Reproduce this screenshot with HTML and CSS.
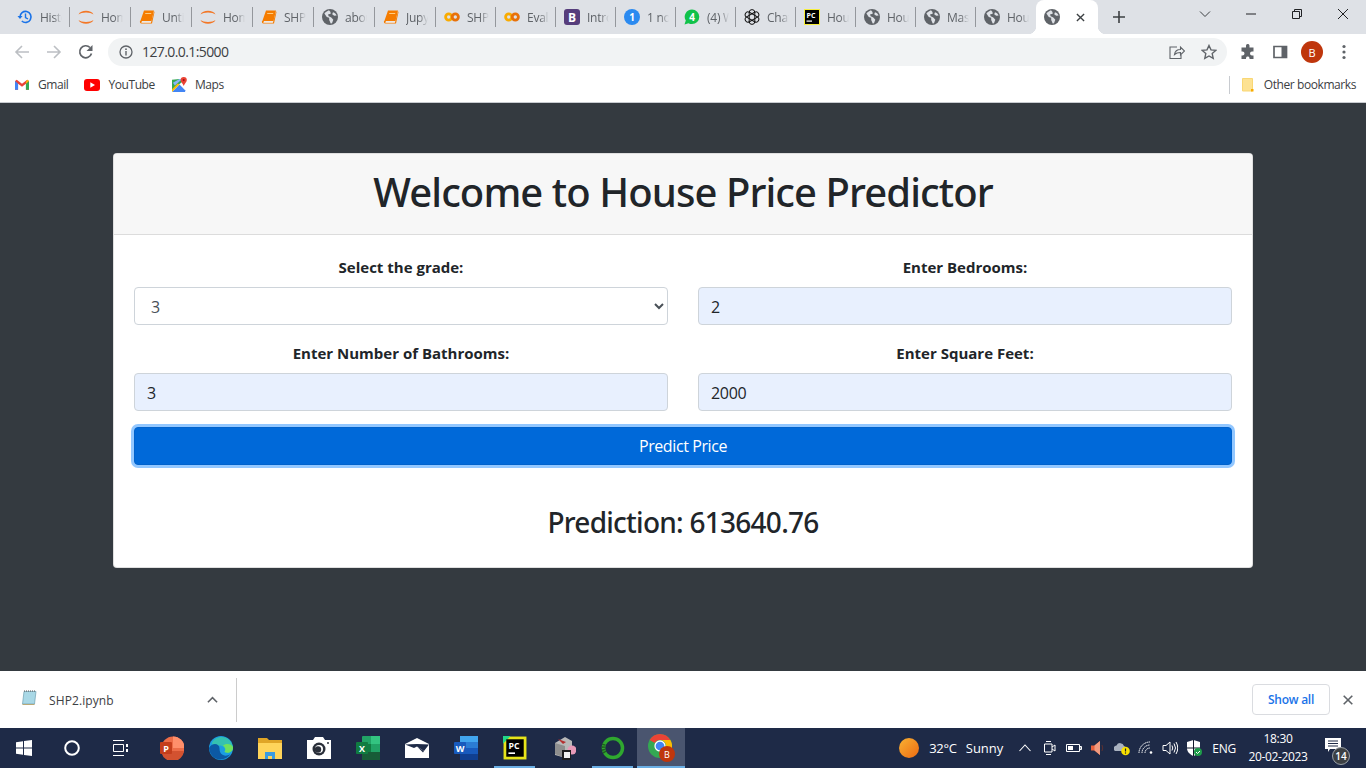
FILE: index.html
```html
<!DOCTYPE html>
<html lang="en">
<head>
<meta charset="utf-8">
<title>House Price Predictor</title>
<link rel="stylesheet" href="styles.css">
</head>
<body>
<svg class="defs" width="0" height="0" aria-hidden="true">
  <symbol id="globe" viewBox="0 0 16 16">
    <circle cx="8" cy="8" r="8" fill="#5f6368"/>
    <path d="M7 1.200C5 2 3.500 3 2.400 4.500L4.800 8l2.400.8V11l1.500 3.600 1.300-.4 1.300-3.500-2-2.200L6.700 7.300 6 5.500 8.700 4.800 8.500 3zM11 3.200l-.8 2 2 1.600 2.400-.3C14.200 5.100 12.800 3.800 11 3.200z" fill="#dee1e6"/>
  </symbol>
  <symbol id="book" viewBox="0 0 16 16">
    <path d="M5 1.500h10L12.500 12H3.500C2.500 12 2 12.500 2 13L1 13z" fill="#f57c00"/>
    <path d="M15 2.500l.5.500L13 14.500H2.500C1 14.500.7 13 1 12l2 0-.4 1.400h9.400z" fill="#f57c00"/>
    <path d="M2.500 12.700h9.500l-.2.800H2.300z" fill="#fff"/>
    <path d="M6.300 4h6l-.2 1h-6z" fill="#ffcc80"/>
  </symbol>
  <symbol id="jup" viewBox="0 0 16 16">
    <path d="M.5 5.500C2.500.5 13.500.5 15.500 5.500 12.500 2.800 3.500 2.800.5 5.500zM.5 11C3.500 13.500 12.500 13.500 15.500 11 13.500 16 2.500 16 .5 11z" fill="#f37726"/>
  </symbol>
  <symbol id="colab" viewBox="0 0 16 16">
    <circle cx="4.700" cy="8" r="3.100" fill="none" stroke="#f9ab00" stroke-width="2.800"/>
    <circle cx="11.300" cy="8" r="3.100" fill="none" stroke="#e8710a" stroke-width="2.800"/>
  </symbol>
  <symbol id="knot" viewBox="0 0 16 16">
    <g fill="none" stroke="#111" stroke-width="1">
      <rect x="5.200" y=".6" width="5.600" height="14.800" rx="2.800"/>
      <rect x="5.200" y=".6" width="5.600" height="14.800" rx="2.800" transform="rotate(60 8 8)"/>
      <rect x="5.200" y=".6" width="5.600" height="14.800" rx="2.800" transform="rotate(120 8 8)"/>
    </g>
  </symbol>
</svg>

<div class="tabstrip">
  <div class="tab"><svg class="fav" viewBox="0 0 16 16"><path d="M3 8a5.500 5.500 0 1 1 1.800 4" fill="none" stroke="#1a73e8" stroke-width="1.600"/><path d="M.5 7h5L3 10z" fill="#1a73e8"/><path d="M8.500 4.500V8.500l2.500 1.500" fill="none" stroke="#1a73e8" stroke-width="1.400"/></svg><span class="tab-title">History</span></div>
  <div class="tab"><svg class="fav"><use href="#jup"/></svg><span class="tab-title">Home</span></div>
  <div class="tab"><svg class="fav"><use href="#book"/></svg><span class="tab-title">Untitled</span></div>
  <div class="tab"><svg class="fav"><use href="#jup"/></svg><span class="tab-title">Home</span></div>
  <div class="tab"><svg class="fav"><use href="#book"/></svg><span class="tab-title">SHP2</span></div>
  <div class="tab"><svg class="fav"><use href="#globe"/></svg><span class="tab-title">about</span></div>
  <div class="tab"><svg class="fav"><use href="#book"/></svg><span class="tab-title">Jupyter</span></div>
  <div class="tab"><svg class="fav"><use href="#colab"/></svg><span class="tab-title">SHP2</span></div>
  <div class="tab"><svg class="fav"><use href="#colab"/></svg><span class="tab-title">Evaluate</span></div>
  <div class="tab"><svg class="fav" viewBox="0 0 16 16"><rect width="16" height="16" rx="3" fill="#563d7c"/><text x="8" y="12.500" class="svg-b">B</text></svg><span class="tab-title">Introduction</span></div>
  <div class="tab"><svg class="fav" viewBox="0 0 16 16"><circle cx="8" cy="8" r="8" fill="#2b8af0"/><text x="8" y="12" class="svg-one">1</text></svg><span class="tab-title">1 note</span></div>
  <div class="tab"><svg class="fav" viewBox="0 0 16 16"><path d="M8 .5a7.300 7.300 0 0 1 0 14.600c-1.300 0-2.500-.3-3.500-.9L.5 15.500l1.300-3.900A7.300 7.300 0 0 1 8 .5z" fill="#11c24a"/><text x="8" y="11.500" class="svg-one">4</text></svg><span class="tab-title">(4) WhatsApp</span></div>
  <div class="tab"><svg class="fav"><use href="#knot"/></svg><span class="tab-title">ChatGPT</span></div>
  <div class="tab"><svg class="fav" viewBox="0 0 16 16"><rect x=".5" y=".5" width="15" height="15" fill="#000" stroke="#f7ee3c"/><text x="2.500" y="8.500" class="svg-pc">PC</text><rect x="2.500" y="11.500" width="5.500" height="1.200" fill="#fff"/></svg><span class="tab-title">House</span></div>
  <div class="tab"><svg class="fav"><use href="#globe"/></svg><span class="tab-title">House</span></div>
  <div class="tab"><svg class="fav"><use href="#globe"/></svg><span class="tab-title">Master</span></div>
  <div class="tab tab-last"><svg class="fav"><use href="#globe"/></svg><span class="tab-title">House</span></div>
  <div class="tab-active">
    <svg class="fav"><use href="#globe"/></svg>
    <svg class="tab-x" viewBox="0 0 10 10"><path d="M1 1l8 8M9 1l-8 8" stroke="#3c4043" stroke-width="1.500"/></svg>
  </div>
  <svg class="newtab" viewBox="0 0 12 12"><path d="M6 0v12M0 6h12" stroke="#3c4043" stroke-width="1.600"/></svg>
  <div class="strip-fill"></div>
  <div class="winbtn"><svg class="win-ic" viewBox="0 0 12 12"><path d="M1 3.500l5 5 5-5" fill="none" stroke="#3c4043"/></svg></div>
  <div class="winbtn"><svg class="win-ic" viewBox="0 0 12 12"><path d="M1 6h10" stroke="#202124"/></svg></div>
  <div class="winbtn"><svg class="win-ic" viewBox="0 0 12 12"><path d="M1.500 3.500h7v7h-7zM3.500 3.500v-2h7v7h-2" fill="none" stroke="#202124"/></svg></div>
  <div class="winbtn"><svg class="win-ic" viewBox="0 0 12 12"><path d="M1 1l10 10M11 1L1 11" stroke="#202124"/></svg></div>
</div>

<div class="toolbar">
  <div class="tb-btn"><svg class="tb-ic" viewBox="0 0 16 16"><path d="M15 8H2M8 2L2 8l6 6" fill="none" stroke="#bcbfc3" stroke-width="1.600"/></svg></div>
  <div class="tb-btn"><svg class="tb-ic" viewBox="0 0 16 16"><path d="M1 8h13M8 2l6 6-6 6" fill="none" stroke="#bcbfc3" stroke-width="1.600"/></svg></div>
  <div class="tb-btn"><svg class="tb-ic" viewBox="0 0 16 16"><path d="M13.500 9.500A6 6 0 1 1 12 3.500" fill="none" stroke="#5f6368" stroke-width="1.700"/><path d="M14.500 1v6h-6z" fill="#5f6368"/></svg></div>
  <div class="omnibox">
    <svg class="omni-info" viewBox="0 0 14 14"><circle cx="7" cy="7" r="6" fill="none" stroke="#5f6368" stroke-width="1.300"/><path d="M7 6v4.500" stroke="#5f6368" stroke-width="1.400"/><circle cx="7" cy="4.200" r=".9" fill="#5f6368"/></svg>
    <span class="omni-url">127.0.0.1:5000</span>
    <span class="omni-fill"></span>
    <svg class="omni-share" viewBox="0 0 16 16"><path d="M5.500 10.500c.5-3.500 3-5 6-5V3l4 4-4 4V8.500c-2.500 0-4.500.5-6 2z" fill="none" stroke="#5f6368" stroke-width="1.100"/><path d="M8 3H1v11.500h11V11" fill="none" stroke="#5f6368" stroke-width="1.100"/></svg>
    <svg class="omni-star" viewBox="0 0 16 16"><path d="M8 1.500l2 4.400 4.800.5-3.600 3.200 1 4.700L8 12l-4.200 2.300 1-4.700L1.200 6.400 6 5.900z" fill="none" stroke="#5f6368" stroke-width="1.400"/></svg>
  </div>
  <div class="tb-right">
    <div class="tb-btn"><svg class="tb-ic" viewBox="0 0 16 16"><path d="M6 1.500a1.800 1.800 0 0 1 3.500 0V3.500h4v4h-1.500a2 2 0 0 0 0 4h1.500V15h-4v-1a1.800 1.800 0 0 0-3.500 0v1H1.500v-3.500h1a2 2 0 0 0 0-4h-1V3.500H6z" fill="#5f6368"/></svg></div>
    <div class="tb-btn"><svg class="tb-ic" viewBox="0 0 16 16"><path d="M2 2.500h12.500v11H2z" fill="none" stroke="#5f6368" stroke-width="1.700"/><path d="M9.500 2.500h5v11h-5z" fill="#5f6368"/></svg></div>
    <div class="tb-btn"><span class="avatar">B</span></div>
    <div class="tb-btn"><svg class="tb-ic" viewBox="0 0 16 16"><circle cx="8" cy="2.500" r="1.600" fill="#5f6368"/><circle cx="8" cy="8" r="1.600" fill="#5f6368"/><circle cx="8" cy="13.500" r="1.600" fill="#5f6368"/></svg></div>
  </div>
</div>

<div class="bookmarks">
  <svg class="bm-ic bm-gmail" viewBox="0 0 16 12"><path d="M0 2v10h3.500V5L8 8.500 12.500 5v7H16V2L14 .5 8 5 2 .5z" fill="#ea4335"/><path d="M0 2v10h3.500V5z" fill="#4285f4"/><path d="M12.500 5v7H16V2z" fill="#34a853"/><path d="M14 .5L16 2l-3.500 3V3z" fill="#fbbc04"/></svg>
  <span class="bm-text">Gmail</span>
  <svg class="bm-ic bm-yt" viewBox="0 0 16 12"><rect width="16" height="12" rx="3" fill="#f00"/><path d="M6.300 3.300L11 6l-4.700 2.700z" fill="#fff"/></svg>
  <span class="bm-text">YouTube</span>
  <svg class="bm-ic bm-maps" viewBox="0 0 16 16"><path d="M0 3l8-1 3 3L0 14z" fill="#34a853"/><path d="M0 16L8 8l6 6v2z" fill="#4285f4"/><path d="M8 8L0 16V13L6 7z" fill="#fbbc04"/><path d="M8 2h3L3 9 1 6z" fill="#8ab4f8"/><path d="M12.500 0A3.300 3.300 0 0 1 15.800 3.300C15.800 5.500 13.500 7 12.500 9.500 11.500 7 9.200 5.500 9.200 3.300A3.300 3.300 0 0 1 12.500 0z" fill="#ea4335"/><circle cx="12.500" cy="3.300" r="1.100" fill="#a50e0e"/></svg>
  <span class="bm-text">Maps</span>
  <span class="bm-fill"></span>
  <span class="bm-sep"></span>
  <svg class="bm-folder" viewBox="0 0 12 14"><path d="M.5.500h10v12.500h-10z" fill="#fde293" stroke="#f9d774"/><path d="M9 11h2.500v2.500H9z" fill="#f9ab00"/></svg>
  <span class="bm-text bm-other">Other bookmarks</span>
</div>

<main class="page">
  <section class="card">
    <header class="card-head"><h1 class="title">Welcome to House Price Predictor</h1></header>
    <form class="card-body">
      <div class="fields">
        <div class="field">
          <label class="label" for="grade">Select the grade:</label>
          <select class="control plain" id="grade"><option>3</option></select>
        </div>
        <div class="field">
          <label class="label" for="bed">Enter Bedrooms:</label>
          <input class="control filled" id="bed" value="2">
        </div>
        <div class="field">
          <label class="label" for="bath">Enter Number of Bathrooms:</label>
          <input class="control filled" id="bath" value="3">
        </div>
        <div class="field">
          <label class="label" for="sqft">Enter Square Feet:</label>
          <input class="control filled" id="sqft" value="2000">
        </div>
      </div>
      <button class="predict" type="button">Predict Price</button>
      <h3 class="result">Prediction: 613640.76</h3>
    </form>
  </section>
</main>

<div class="downloads">
  <svg class="dl-file" viewBox="0 0 16 16"><path d="M3 1.500h12l-1.500 12.500H1.500z" fill="#a9d8e6" stroke="#6f9fb0" stroke-width=".7"/><path d="M3 1l11.500 0" stroke="#555" stroke-dasharray="1 1"/><path d="M1.500 14.500h12" stroke="#b8a878"/></svg>
  <span class="dl-name">SHP2.ipynb</span>
  <svg class="dl-chev" viewBox="0 0 12 8"><path d="M1 6.500l5-5 5 5" fill="none" stroke="#5f6368" stroke-width="1.700"/></svg>
  <span class="dl-sep"></span>
  <span class="dl-fill"></span>
  <span class="showall">Show all</span>
  <svg class="dl-x" viewBox="0 0 10 10"><path d="M.7.700l8.600 8.600M9.300.700L.7 9.300" stroke="#5f6368" stroke-width="1.600"/></svg>
</div>

<footer class="taskbar">
  <div class="tk tk-sys"><svg class="tk-win" viewBox="0 0 16 16"><path d="M0 2.300L7 1.300V7.500H0zM8 1.100L16 0V7.500H8zM0 8.500H7V14.700L0 13.700zM8 8.500H16V16L8 14.900z" fill="#fff"/></svg></div>
  <div class="tk tk-sys"><svg class="tk-ic16" viewBox="0 0 16 16"><circle cx="8" cy="8" r="6.800" fill="none" stroke="#fff" stroke-width="2"/></svg></div>
  <div class="tk tk-sys"><svg class="tk-ic16" viewBox="0 0 16 16"><path d="M1 .5h11M1 15.500h11M1.500 4.500h10v7h-10z" fill="none" stroke="#fff"/><path d="M14 4h2v3h-2zM14 9h2v3h-2z" fill="#fff"/></svg></div>
  <div class="tk-gap"></div>
  <div class="tk"><svg class="tk-ic" viewBox="0 0 24 24"><circle cx="13" cy="12" r="11.500" fill="#ed6c47"/><path d="M13 .5A11.500 11.500 0 0 1 24.500 12H13z" fill="#ff8f6b"/><path d="M1.500 17A11.500 11.500 0 0 0 24 15H6z" fill="#d35230"/><rect y="6" width="12" height="12" rx="1" fill="#c43e1c"/><text x="6" y="15.500" class="svg-tkl">P</text></svg></div>
  <div class="tk"><svg class="tk-ic" viewBox="0 0 24 24"><circle cx="12" cy="12" r="12" fill="#1b9de2"/><path d="M3 7C6-1 21-2 24 11c.5 5-5 7-8.500 5 2-3-1-7-5.500-6.500C6 10 3.500 12 3 7z" fill="#35c1b0"/><path d="M24 11c.5 5-5 7-8.500 5 2-3 .5-5-1.500-6.500C18 7 22 8 24 11z" fill="#6ee05e"/><path d="M0 12c3-6 11-5 10.500 1 0 5 5 9 11 5-5 8-20 8-21.500-6z" fill="#0c59a4"/></svg></div>
  <div class="tk"><svg class="tk-ic" viewBox="0 0 24 24"><path d="M0 2h9l2 2h13v19H0z" fill="#e0a526"/><path d="M0 7h24v16H0z" fill="#ffd45a"/><path d="M7 23v-7h10v7h-3v-3h-4v3z" fill="#3a9be0"/></svg></div>
  <div class="tk"><svg class="tk-ic" viewBox="0 0 24 24"><path d="M0 4h6l2-3h8l2 3h6v19H0z" fill="#fff"/><circle cx="12" cy="13" r="6.500" fill="#2a2f3a"/><circle cx="12" cy="13" r="4" fill="#fff"/><circle cx="11" cy="13.500" r="3.200" fill="#2a2f3a"/><circle cx="21" cy="7" r="1" fill="#2a2f3a"/></svg></div>
  <div class="tk"><svg class="tk-ic" viewBox="0 0 24 24"><rect x="6" y="0" width="18" height="24" rx="1" fill="#21a366"/><rect x="15" y="0" width="9" height="8" fill="#33c481"/><rect x="6" y="8" width="9" height="8" fill="#107c41"/><rect x="15" y="16" width="9" height="8" fill="#185c37"/><rect x="6" y="16" width="9" height="8" fill="#185c37"/><rect y="6" width="12" height="12" rx="1" fill="#107c41"/><text x="6" y="15.500" class="svg-tkl">X</text></svg></div>
  <div class="tk"><svg class="tk-ic" viewBox="0 0 24 20"><path d="M0 6L12 0l12 6v14H0z" fill="#fff"/><path d="M0 6.500L12 6l12 .5-5 6.500-7-4.500-3 1.500z" fill="#1e2a47"/><path d="M12 8.500l7 4.500-1 1.500z" fill="#1e2a47"/></svg></div>
  <div class="tk"><svg class="tk-ic" viewBox="0 0 24 24"><rect x="6" y="0" width="18" height="24" rx="1" fill="#2b7cd3"/><rect x="6" y="0" width="18" height="6" fill="#41a5ee"/><rect x="6" y="12" width="18" height="6" fill="#185abd"/><rect x="6" y="18" width="18" height="6" fill="#103f91"/><rect y="6" width="12" height="12" rx="1" fill="#185abd"/><text x="6" y="15.500" class="svg-tkl">W</text></svg></div>
  <div class="tk tk-open"><svg class="tk-ic" viewBox="0 0 22 22"><rect x=".5" y=".5" width="21" height="21" fill="#e7e41a"/><path d="M0 0h7L0 7z" fill="#21d789"/><rect x="3" y="3" width="16" height="16" fill="#000"/><text x="5" y="11.500" class="svg-pct">PC</text><rect x="5" y="15" width="6" height="1.500" fill="#fff"/></svg></div>
  <div class="tk"><svg class="tk-ic" viewBox="0 0 24 24"><path d="M3 7l10-6 7 4v9l-6 8-11-3z" fill="#b8b8b8"/><path d="M3 7l10 3v12L3 18z" fill="#8e8e8e"/><path d="M6 3l8 3-3 2z" fill="#b33030"/><circle cx="20" cy="14" r="4.500" fill="#e79ab8"/><rect x="10" y="14" width="9" height="10" fill="#1d1d1d"/><rect x="12" y="16" width="6" height="6" fill="#f2f2f2"/></svg></div>
  <div class="tk tk-open"><svg class="tk-ic" viewBox="0 0 24 24"><circle cx="12" cy="12" r="9.500" fill="none" stroke="#2fa82f" stroke-width="3.500"/><path d="M3 8A10 10 0 0 0 4 17" fill="none" stroke="#1f5e1f" stroke-width="3.500" stroke-dasharray="1.500 1"/></svg></div>
  <div class="tk tk-active">
    <svg class="tk-chrome" viewBox="0 0 24 24"><circle cx="12" cy="12" r="12" fill="#34a853"/><path d="M12 0a12 12 0 0 1 10.400 6H12a6 6 0 0 0-5.200 3L1.600 6A12 12 0 0 1 12 0z" fill="#ea4335"/><path d="M22.400 6A12 12 0 0 1 12 24l5.200-9A6 6 0 0 0 12 6z" fill="#fbbc04"/><circle cx="12" cy="12" r="5" fill="#4285f4" stroke="#fff" stroke-width="1.300"/></svg>
    <span class="tk-badge">B</span>
  </div>
  <div class="tk-fill"></div>
  <svg class="sun" viewBox="0 0 20 20"><defs><linearGradient id="sung" x1="0" y1="0" x2="1" y2="1"><stop offset="0" stop-color="#f9b233"/><stop offset="1" stop-color="#ec6a12"/></linearGradient></defs><circle cx="10" cy="10" r="10" fill="url(#sung)"/></svg>
  <span class="tk-text tk-temp">32°C</span>
  <span class="tk-text tk-sunny">Sunny</span>
  <svg class="tray tray-up" viewBox="0 0 12 8"><path d="M.5 7l5.500-6 5.500 6" fill="none" stroke="#fff" stroke-width="1.100"/></svg>
  <svg class="tray" viewBox="0 0 16 16"><path d="M2.500 4h7.500v8h-7.500z M10 7l3-2v6l-3-2" fill="none" stroke="#fff"/><path d="M4 1.500h5M4 14.500h5" stroke="#fff"/></svg>
  <svg class="tray" viewBox="0 0 16 16"><path d="M.5 4.500h13v7H.500zM14 6.500h1.500v3H14z" fill="none" stroke="#fff"/><rect x="2" y="6" width="5" height="4" fill="#fff"/></svg>
  <svg class="tray" viewBox="0 0 16 16"><path d="M1 5.500h3.500L10 1v14L4.500 10.500H1z" fill="#e8603c"/><path d="M4.500 5.500L10 1v14L4.500 10.500z" fill="#f29a7e"/><path d="M12 5q1.500 3 0 6" stroke="#5c3030" fill="none"/></svg>
  <svg class="tray" viewBox="0 0 16 16"><path d="M1 11a3 3 0 0 1 1.500-5.500A4 4 0 0 1 10 6a3 3 0 0 1 1 5z" fill="#a9b2c0"/><circle cx="11.500" cy="11" r="4.300" fill="#f8e000"/><path d="M11.500 8.500v3" stroke="#222" stroke-width="1.200"/><circle cx="11.500" cy="13" r=".7" fill="#222"/></svg>
  <svg class="tray" viewBox="0 0 16 16"><path d="M1 13A11 11 0 0 1 12 2M4 13a8 8 0 0 1 8-8M7 13a5 5 0 0 1 5-5" fill="none" stroke="#fff" stroke-dasharray="1.500 .5"/><circle cx="13" cy="12.500" r="1.300" fill="#fff"/></svg>
  <svg class="tray" viewBox="0 0 16 16"><path d="M1 5.500h3L8 2v12l-4-3.500H1z" fill="none" stroke="#fff"/><path d="M10 5.500q1.500 2.500 0 5M12 3.500q3 4.500 0 9M14 2q3.500 6 0 12" fill="none" stroke="#fff"/></svg>
  <svg class="tray tray-shield" viewBox="0 0 16 16"><path d="M7.500 0l6.500 2v6c0 4-3 6.500-6.500 8C4 14.500 1 12 1 8V2z" fill="#fff"/><path d="M7 0h1v16H7zM1 7.500h13v1H1z" fill="#11182a"/><circle cx="12" cy="12" r="4" fill="#1e9c4a"/><path d="M10 12l1.500 1.500 2.500-2.500" fill="none" stroke="#fff"/></svg>
  <span class="tk-text tk-eng">ENG</span>
  <div class="clock"><span>18:30</span><span>20-02-2023</span></div>
  <div class="notif">
    <svg class="notif-ic" viewBox="0 0 16 14"><path d="M0 0h16v11H5l-2 3v-3H0z" fill="#fff"/><path d="M3 3h10M3 5.500h10M3 8h10" stroke="#1e2a47"/></svg>
    <span class="notif-badge">14</span>
  </div>
</footer>
</body>
</html>
```
FILE: styles.css
```css
* { box-sizing: border-box; }
html, body { margin: 0; padding: 0; }
body {
  width: 1366px;
  height: 768px;
  overflow: hidden;
  display: flex;
  flex-direction: column;
  font-family: "Open Sans", "Noto Sans", sans-serif;
  background: #fff;
}
.defs { position: absolute; }

/* tab strip */
.tabstrip {
  height: 34px;
  flex: none;
  display: flex;
  align-items: flex-start;
  padding-left: 9px;
  background: #dee1e6;
}
.tab {
  width: 61px;
  height: 20px;
  margin-top: 7px;
  flex: none;
  display: flex;
  align-items: center;
  gap: 7px;
  padding-left: 8px;
  border-right: 1px solid #94979c;
}
.tab:nth-child(n+8) { width: 60px; }
.tab-last { border-right: 0; }
.fav { width: 16px; height: 16px; flex: none; }
.tab-title {
  width: 22px;
  overflow: hidden;
  white-space: nowrap;
  font-size: 12px;
  letter-spacing: -.25px;
  color: #5f6368;
  -webkit-mask-image: linear-gradient(90deg, #000 60%, transparent 100%);
  mask-image: linear-gradient(90deg, #000 60%, transparent 100%);
}
.tab-active {
  position: relative;
  width: 62px;
  height: 34px;
  flex: none;
  display: flex;
  align-items: center;
  padding-left: 8px;
  background: #fff;
  border-radius: 8px 8px 0 0;
}
.tab-active::before,
.tab-active::after {
  content: "";
  position: absolute;
  bottom: 0;
  width: 8px;
  height: 8px;
}
.tab-active::before { left: -8px; background: radial-gradient(circle at 0 0, transparent 8px, #fff 8.500px); }
.tab-active::after { right: -8px; background: radial-gradient(circle at 100% 0, transparent 8px, #fff 8.500px); }
.tab-x { width: 9px; height: 9px; margin-left: 16px; }
.newtab { width: 12px; height: 12px; margin: 11px 0 0 15px; flex: none; }
.strip-fill { flex: 1; }
.winbtn { width: 46px; height: 28px; flex: none; display: flex; align-items: center; justify-content: center; }
.win-ic { width: 12px; height: 12px; }

/* toolbar */
.toolbar {
  height: 38px;
  flex: none;
  display: flex;
  align-items: center;
  padding: 0 6px 2px 6px;
  background: #fff;
}
.tb-btn { width: 32px; height: 28px; flex: none; display: flex; align-items: center; justify-content: center; }
.tb-ic { width: 16px; height: 16px; }
.omnibox {
  flex: 1;
  height: 28px;
  margin-left: 6px;
  display: flex;
  align-items: center;
  padding: 0 10px 0 11px;
  border-radius: 14px;
  background: #f1f3f4;
}
.omni-info { width: 14px; height: 14px; flex: none; }
.omni-url { margin: -2px 0 0 9px; font-size: 14px; letter-spacing: -.6px; color: #3c4043; }
.omni-fill { flex: 1; }
.omni-share { width: 16px; height: 16px; flex: none; }
.omni-star { width: 16px; height: 16px; flex: none; margin-left: 16px; }
.tb-right { display: flex; margin-left: 5px; align-items: center; }
.avatar {
  width: 22px;
  height: 22px;
  border-radius: 50%;
  display: flex;
  align-items: center;
  justify-content: center;
  background: #bf360c;
  color: #fff;
  font-size: 11px;
}

/* bookmarks */
.bookmarks {
  height: 31px;
  flex: none;
  display: flex;
  align-items: center;
  padding: 0 10px 5px 15px;
  background: #fff;
  border-bottom: 1px solid #c8cbd0;
}
.bm-text { font-size: 12px; letter-spacing: -.42px; color: #3c4043; }
.bm-ic { flex: none; }
.bm-gmail { width: 14px; height: 11px; margin-right: 9px; }
.bm-yt { width: 16px; height: 12px; margin: 0 8px 0 16px; }
.bm-maps { width: 15px; height: 15px; margin: 0 8px 0 17px; }
.bm-fill { flex: 1; }
.bm-sep { width: 1px; height: 18px; background: #c8cbd0; margin-right: 12px; }
.bm-folder { width: 12px; height: 14px; margin-right: 10px; flex: none; }

/* page */
.page {
  flex: 1;
  padding: 50px 113px 0;
  background: #343a40;
}
.card {
  width: 1140px;
  height: 415px;
  background: #fff;
  border: 1px solid rgba(0, 0, 0, .125);
  border-radius: 4px;
  overflow: hidden;
}
.card-head {
  height: 81px;
  display: flex;
  align-items: center;
  justify-content: center;
  padding-bottom: 6px;
  background: #f7f7f7;
  border-bottom: 1px solid #dcdcdc;
}
.title {
  margin: 0;
  font-family: "Noto Sans", "Open Sans", sans-serif;
  font-size: 40px;
  font-weight: 500;
  letter-spacing: -.92px;
  color: #212529;
}
.card-body { padding: 20px 20px 0; }
.fields {
  display: grid;
  grid-template-columns: 534px 534px;
  column-gap: 30px;
  row-gap: 16px;
}
.field { display: flex; flex-direction: column; align-items: stretch; }
.label {
  height: 24px;
  margin-bottom: 8px;
  text-align: center;
  font-size: 15px;
  line-height: 24px;
  font-weight: 700;
  color: #212529;
}
.control {
  width: 100%;
  height: 38px;
  padding: 7px 12px 5px;
  font: 400 16px "Open Sans", "Noto Sans", sans-serif;
  letter-spacing: -.3px;
  border: 1px solid #ced4da;
  border-radius: 4px;
  outline: 0;
}
.plain { background: #fff; color: #495057; }
.filled { background: #e8f0fe; color: #212529; }
.predict {
  display: block;
  width: 100%;
  height: 38px;
  margin-top: 16px;
  border: 1px solid #0062cc;
  border-radius: 4px;
  background: #0069d9;
  color: #fff;
  font: 400 16px "Open Sans", "Noto Sans", sans-serif;
  letter-spacing: -.4px;
  box-shadow: 0 0 0 3px rgba(38, 143, 255, .5);
}
.result {
  margin: 40px 0 0;
  text-align: center;
  font-family: "Noto Sans", "Open Sans", sans-serif;
  font-size: 28px;
  line-height: 34px;
  font-weight: 500;
  letter-spacing: -.74px;
  color: #212529;
}

/* download bar */
.downloads {
  height: 57px;
  flex: none;
  display: flex;
  align-items: center;
  padding: 0 13px 0 21px;
  background: #fff;
}
.dl-file { width: 16px; height: 16px; flex: none; margin-top: -4px; }
.dl-name { margin: 2px 0 0 12px; width: 158px; font-size: 12px; letter-spacing: .1px; color: #3c4043; }
.dl-chev { width: 11px; height: 8px; flex: none; }
.dl-sep { width: 1px; height: 44px; margin-left: 18px; background: #ccc; }
.dl-fill { flex: 1; }
.showall {
  width: 78px;
  height: 31px;
  display: flex;
  align-items: center;
  justify-content: center;
  border: 1px solid #dadce0;
  border-radius: 4px;
  font-size: 12px;
  font-weight: 600;
  letter-spacing: -.25px;
  color: #1a73e8;
}
.dl-x { width: 10px; height: 10px; flex: none; margin-left: 13px; }

/* taskbar */
.taskbar {
  height: 40px;
  flex: none;
  display: flex;
  align-items: center;
  background: #1e2a47;
}
.tk {
  width: 49px;
  height: 40px;
  flex: none;
  display: flex;
  align-items: center;
  justify-content: center;
}
.tk-sys { width: 48px; }
.tk-gap { width: 3px; flex: none; }
.tk-win { width: 16px; height: 16px; }
.tk-ic16 { width: 16px; height: 16px; }
.tk-ic { width: 24px; height: 24px; }
.tk-open { border-bottom: 2px solid #6aaee4; padding-top: 2px; }
.tk-open { margin: 0 4px; width: 41px; }
.tk-active {
  position: relative;
  width: 48px;
  background: #4a556f;
  border-bottom: 2px solid #6aaee4;
}
.tk-chrome { width: 24px; height: 24px; margin: 0 3px 2px 0; }
.tk-badge {
  position: absolute;
  left: 22px;
  top: 18px;
  width: 16px;
  height: 16px;
  border-radius: 50%;
  display: flex;
  align-items: center;
  justify-content: center;
  background: #bf360c;
  color: #fff;
  font-size: 9px;
}
.tk-fill { flex: 1; }
.sun { width: 20px; height: 20px; flex: none; margin-right: 1px; }
.tk-text { font-size: 13px; color: #fff; flex: none; }
.tk-temp { margin-left: 9px; letter-spacing: -.25px; }
.tk-sunny { margin-left: 9px; margin-right: 16px; }
.tray { width: 16px; height: 16px; flex: none; margin-right: 8px; }
.tray-up { width: 12px; height: 8px; margin: 0 11px 0 0; }
.tk-eng { font-size: 12px; margin-left: 2px; letter-spacing: -.25px; }
.clock {
  width: 84px;
  flex: none;
  display: flex;
  flex-direction: column;
  align-items: center;
  font-size: 12px;
  line-height: 18px;
  letter-spacing: -.35px;
  color: #fff;
}
.notif { position: relative; width: 46px; height: 40px; flex: none; display: flex; align-items: center; padding-left: 5px; }
.notif-ic { width: 16px; height: 14px; margin-bottom: 6px; }
.notif-badge {
  position: absolute;
  left: 12px;
  top: 19px;
  width: 18px;
  height: 18px;
  border-radius: 50%;
  display: flex;
  align-items: center;
  justify-content: center;
  background: #3c4043;
  border: 1px solid #9aa0a6;
  color: #fff;
  font-size: 10px;
  font-weight: 600;
}

/* small text inside icons */
.svg-b { font: 700 12px "Open Sans", sans-serif; fill: #fff; text-anchor: middle; }
.svg-one { font: 700 10px "Open Sans", sans-serif; fill: #fff; text-anchor: middle; }
.svg-pc { font: 700 7px "Open Sans", sans-serif; fill: #fff; }
.svg-pct { font: 700 8px "Open Sans", sans-serif; fill: #fff; }
.svg-tkl { font: 700 9px "Open Sans", sans-serif; fill: #fff; text-anchor: middle; }
```
